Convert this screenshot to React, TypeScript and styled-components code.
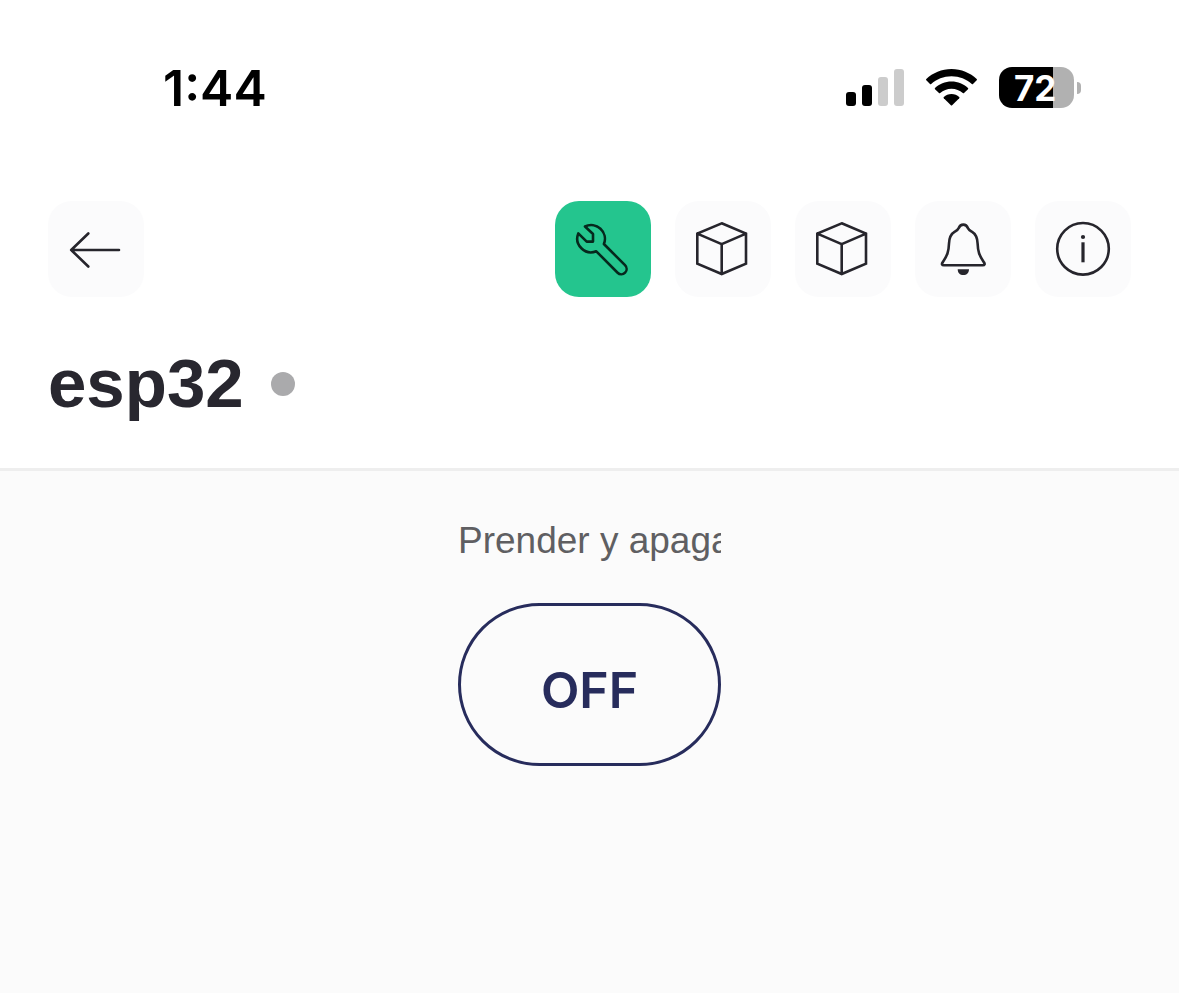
import React from 'react';
import styled, { createGlobalStyle } from 'styled-components';

const GlobalStyle = createGlobalStyle`
  * { box-sizing: border-box; }
  body {
    margin: 0;
    background: #fbfbfb;
    color: #28272f;
    font-family: "Liberation Sans", Arial, sans-serif;
  }
`;

const Page = styled.div`
  display: flex;
  flex-direction: column;
  min-height: 100vh;
  background: #fbfbfb;
`;

const Top = styled.header`
  background: #fff;
  border-bottom: 3px solid #eeeeee;
`;

const StatusBar = styled.div`
  display: flex;
  align-items: center;
  justify-content: space-between;
  height: 175px;
  padding: 0 98px 0 163px;
  color: #000;
  font-family: Inter, sans-serif;
`;

const Clock = styled.time`
  font-size: 50px;
  line-height: 60px;
  font-weight: 600;
`;

const Indicators = styled.div`
  display: flex;
  align-items: center;
  gap: 22px;
`;

const Battery = styled.div`
  display: flex;
  align-items: center;
  gap: 3px;
`;

const BatteryBody = styled.div<{ $level: number }>`
  width: 75px;
  height: 41px;
  padding-left: 15px;
  border-radius: 13px;
  background: linear-gradient(to right, #000 ${(p) => p.$level}%, #b1b1b1 ${(p) => p.$level}%);
  color: #fff;
  font-size: 35px;
  line-height: 42px;
  font-weight: 700;
`;

const BatteryCap = styled.div`
  width: 4px;
  height: 12px;
  border-radius: 0 6px 6px 0;
  background: #b1b1b1;
`;

const Toolbar = styled.nav`
  display: flex;
  justify-content: space-between;
  padding: 26px 48px 0;
`;

const Actions = styled.div`
  display: flex;
  gap: 24px;
`;

const IconButton = styled.button<{ $active?: boolean }>`
  width: 96px;
  height: 96px;
  padding: 0;
  border: 0;
  border-radius: 24px;
  background: ${(p) => (p.$active ? '#24c58e' : '#fbfbfc')};
  color: ${(p) => (p.$active ? '#06281d' : '#26252c')};
  cursor: pointer;

  svg {
    display: block;
  }
`;

const TitleRow = styled.div`
  display: flex;
  align-items: center;
  gap: 27px;
  padding: 48px 48px 45px;
`;

const Title = styled.h1`
  margin: 0;
  font-size: 69px;
  line-height: 78px;
  font-weight: 700;
`;

const StatusDot = styled.span`
  width: 24px;
  height: 24px;
  border-radius: 50%;
  background: #aaaaac;
`;

const Dashboard = styled.main`
  display: flex;
  flex: 1;
  flex-direction: column;
  align-items: center;
  padding: 48px;
`;

const Widget = styled.section`
  width: 263px;
`;

const WidgetLabel = styled.label`
  display: block;
  overflow: hidden;
  color: #5f5f62;
  font-size: 37px;
  line-height: 44px;
  white-space: nowrap;
`;

const SwitchButton = styled.button`
  width: 100%;
  height: 163px;
  margin-top: 40px;
  padding: 10px 0 0;
  border: 3px solid #272c5c;
  border-radius: 82px;
  background: transparent;
  color: #272c5c;
  font-family: Inter, sans-serif;
  font-size: 50px;
  line-height: 60px;
  font-weight: 600;
  cursor: pointer;
`;

const Glyph = ({ children }: { children: React.ReactNode }) => (
  <svg
    width="96"
    height="96"
    viewBox="0 0 96 96"
    fill="none"
    stroke="currentColor"
    strokeWidth="2.6"
    strokeLinecap="round"
    strokeLinejoin="round"
    aria-hidden="true"
  >
    {children}
  </svg>
);

const ArrowGlyph = () => (
  <Glyph>
    <path d="M71 49H23.2M40.3 32.5L23.2 49L40.3 65.5" />
  </Glyph>
);

const WrenchGlyph = () => (
  <Glyph>
    <path d="M30 25.5A13.8 13.8 0 0 1 48.9 43L70 64.2A5.2 5.2 0 0 1 62.6 71.8L41.3 50.3A13.8 13.8 0 0 1 23.3 32.4L31.7 40.6H38V33Z" />
  </Glyph>
);

const CubeGlyph = () => (
  <Glyph>
    <path
      strokeLinejoin="miter"
      d="M46.7 22.3L71 32.6V62.6L46.7 73L22.3 62.6V32.6ZM22.3 32.6L46.7 43.2L71 32.6M46.7 43.2V73"
    />
  </Glyph>
);

const BellGlyph = () => (
  <Glyph>
    <path d="M48.3 23.6C45.6 23.6 44.4 25.2 43.6 27.2C42.9 28.9 41.4 29.7 39.8 30.6C36 32.8 34.2 37.2 34 42.5C33.7 51 32.3 54.5 27.6 61.4C26.4 63 27 64.2 28.8 64.2H67.8C69.6 64.2 70.2 63 69 61.4C64.3 54.5 62.9 51 62.6 42.5C62.4 37.2 60.6 32.8 56.8 30.6C55.2 29.7 53.7 28.9 53 27.2C52.2 25.2 51 23.6 48.3 23.6Z" />
    <path d="M42.7 68.2H54C54 71.8 51.7 74 48.3 74S42.7 71.8 42.7 68.2Z" fill="currentColor" stroke="none" />
  </Glyph>
);

const InfoGlyph = () => (
  <Glyph>
    <circle cx="48" cy="47.8" r="25.8" />
    <circle cx="48" cy="36" r="2.1" fill="currentColor" stroke="none" />
    <path d="M48 41.3V61.3" strokeWidth="3.2" strokeLinecap="butt" />
  </Glyph>
);

const SignalIcon = () => (
  <svg width="58" height="39" viewBox="0 0 58 39" role="img" aria-label="Signal">
    <rect x="0" y="24" width="10" height="14" rx="3" />
    <rect x="16" y="17" width="10" height="21" rx="3" />
    <rect x="32" y="9" width="10" height="29" rx="3" fill="#cccccc" />
    <rect x="48" y="1" width="10" height="37" rx="3" fill="#cccccc" />
  </svg>
);

const WifiIcon = () => (
  <svg width="51" height="39" viewBox="0 0 51 39" role="img" aria-label="Wi-Fi">
    <path d="M25.5 1C35.3 1 44.2 4.8 50.7 11.1Q51.2 11.7 50.7 12.3L47 16Q46.4 16.5 45.8 16C40.5 11.2 33.3 8.3 25.5 8.3S10.5 11.2 5.2 16Q4.6 16.5 4 16L.3 12.3Q-.2 11.7 .3 11.1C6.8 4.8 15.7 1 25.5 1Z" />
    <path d="M25.5 13.6C31.9 13.6 37.7 16 42 20.1Q42.5 20.7 42 21.3L38 25.1Q37.4 25.6 36.8 25.1C33.8 22.4 29.8 20.8 25.5 20.8S17.2 22.4 14.2 25.1Q13.6 25.6 13 25.1L9 21.3Q8.5 20.7 9 20.1C13.3 16 19.1 13.6 25.5 13.6Z" />
    <path d="M25.5 26.1C28.5 26.1 31.2 27.2 33.2 29Q33.8 29.6 33.2 30.2L26.1 37.2Q25.5 37.7 24.9 37.2L17.8 30.2Q17.2 29.6 17.8 29C19.8 27.2 22.5 26.1 25.5 26.1Z" />
  </svg>
);

export default function App() {
  const [on, setOn] = React.useState(false);

  return (
    <Page>
      <GlobalStyle />
      <Top>
        <StatusBar>
          <Clock>1:44</Clock>
          <Indicators>
            <SignalIcon />
            <WifiIcon />
            <Battery>
              <BatteryBody $level={72}>72</BatteryBody>
              <BatteryCap />
            </Battery>
          </Indicators>
        </StatusBar>
        <Toolbar>
          <IconButton aria-label="Back"><ArrowGlyph /></IconButton>
          <Actions>
            <IconButton $active aria-label="Settings"><WrenchGlyph /></IconButton>
            <IconButton aria-label="Device"><CubeGlyph /></IconButton>
            <IconButton aria-label="Components"><CubeGlyph /></IconButton>
            <IconButton aria-label="Notifications"><BellGlyph /></IconButton>
            <IconButton aria-label="Information"><InfoGlyph /></IconButton>
          </Actions>
        </Toolbar>
        <TitleRow>
          <Title>esp32</Title>
          <StatusDot />
        </TitleRow>
      </Top>
      <Dashboard>
        <Widget>
          <WidgetLabel htmlFor="power">Prender y apagar</WidgetLabel>
          <SwitchButton id="power" aria-pressed={on} onClick={() => setOn(!on)}>
            {on ? 'ON' : 'OFF'}
          </SwitchButton>
        </Widget>
      </Dashboard>
    </Page>
  );
}
